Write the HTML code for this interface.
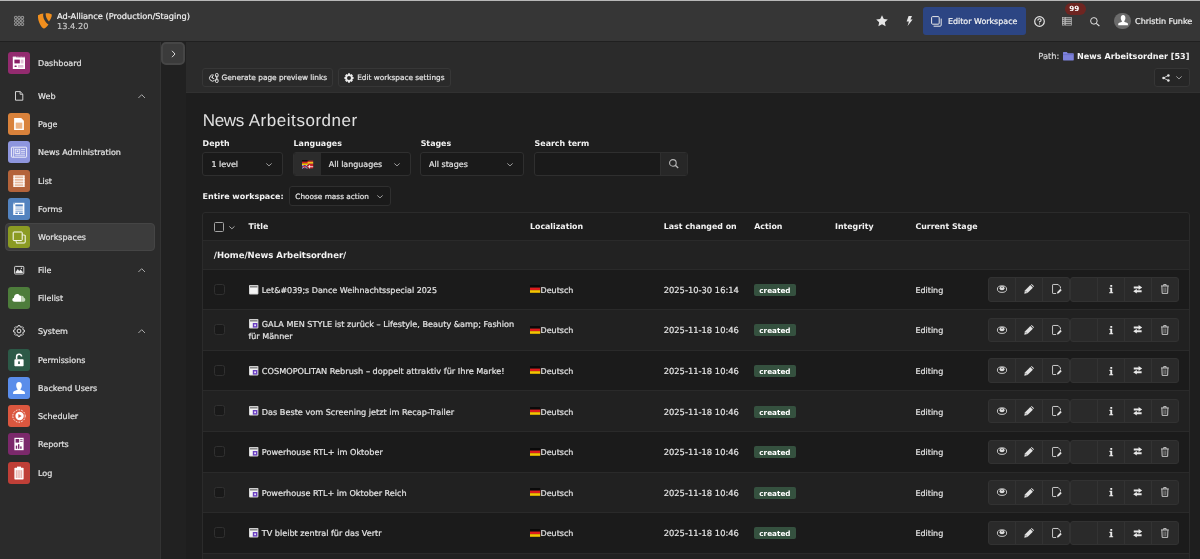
<!DOCTYPE html>
<html lang="en">
<head>
<meta charset="utf-8">
<title>Workspaces</title>
<style>
*{box-sizing:border-box;margin:0;padding:0}
html,body{width:1200px;height:559px;overflow:hidden;background:#1e1e1e;color:#e8e8e8;
  font-family:"DejaVu Sans","Liberation Sans",sans-serif;font-size:8px;text-rendering:geometricPrecision;-webkit-font-smoothing:antialiased}
body{position:relative}
#root{position:absolute;left:0;top:0;width:1200px;height:559px;will-change:transform;overflow:hidden}
.a{position:absolute}
.t{position:absolute;white-space:nowrap;line-height:10px;color:#e4e4e4;-webkit-text-stroke:0.2px}
.b{font-weight:700;-webkit-text-stroke:0}
svg{position:absolute;overflow:visible}
#topline{left:0;top:0;width:1200px;height:1px;background:#b8b8b8}
#topbar{left:0;top:1px;width:1200px;height:41px;background:#363636;border-bottom:1px solid #202020}
#sidebar{left:0;top:42px;width:161px;height:518px;background:#2b2b2b;border-right:1px solid #333333}
#strip{left:161px;top:42px;width:25px;height:518px;background:#212121}
#dochead{left:186px;top:42px;width:1014px;height:51px;background:#2b2b2b;border-bottom:1px solid #313131}
#toggle{left:161px;top:41.6px;width:24.4px;height:23.6px;background:#3b3b3b;border:2.6px solid #464646;border-radius:5px}
.mi{position:absolute;left:8px;width:22px;height:22px;border-radius:3px}
#active{left:5px;top:223.2px;width:150px;height:27.6px;background:#3c3c3c;border-radius:4px;border:1px solid #454545}
.btn{position:absolute;border:1px solid #373737;border-radius:3px;background:#2a2a2a}
h1{position:absolute;left:202.7px;top:108.6px;font-family:"Liberation Sans",sans-serif;font-weight:400;font-size:17px;color:#e0e0e0;line-height:24px;white-space:nowrap;letter-spacing:-0.22px}
.sel{position:absolute;border:1px solid #2f2f2f;border-radius:3px;background:#1a1a1a}
#table{left:202px;top:212px;width:988px;height:360px;border:1px solid #2b2b2b;background:#1d1d1d;border-radius:3px 3px 0 0}
.row{position:absolute;left:203px;width:986px;border-top:1px solid #2a2a2a}
.cb{position:absolute;left:213.6px;width:11px;height:11px;border:1px solid #303030;border-radius:2.5px;background:#191919}
.badge{position:absolute;left:754px;width:42px;height:12px;border-radius:2px;background:#35513f}
.grp{position:absolute;height:24.4px;border:1px solid #323232;border-radius:3px;background:#2a2a2a}
.sep{position:absolute;width:1px;height:22.4px;background:#333333}
</style>
</head>
<body>
<div id="root">
<div class="a" id="topbar"></div><div class="a" id="topline"></div>
<div class="a" id="sidebar"></div><div class="a" id="strip"></div><div class="a" id="dochead"></div>
<div class="a" id="toggle"></div>
<svg style="left:170.6px;top:49.6px" width="5" height="8" viewBox="0 0 5 8"><path d="M1 0.8 L4 4 L1 7.2" fill="none" stroke="#dcdcdc" stroke-width="1"/></svg>
<svg style="left:13.9px;top:15.9px" width="10.3" height="9.9" viewBox="0 0 10.5 10.5"><rect x="0.4" y="0.4" width="2.6" height="2.6" rx="0.6" fill="none" stroke="#bcbcbc" stroke-width="0.8"/><rect x="3.9" y="0.4" width="2.6" height="2.6" rx="0.6" fill="none" stroke="#bcbcbc" stroke-width="0.8"/><rect x="7.4" y="0.4" width="2.6" height="2.6" rx="0.6" fill="none" stroke="#bcbcbc" stroke-width="0.8"/><rect x="0.4" y="3.9" width="2.6" height="2.6" rx="0.6" fill="none" stroke="#bcbcbc" stroke-width="0.8"/><rect x="3.9" y="3.9" width="2.6" height="2.6" rx="0.6" fill="none" stroke="#bcbcbc" stroke-width="0.8"/><rect x="7.4" y="3.9" width="2.6" height="2.6" rx="0.6" fill="none" stroke="#bcbcbc" stroke-width="0.8"/><rect x="0.4" y="7.4" width="2.6" height="2.6" rx="0.6" fill="none" stroke="#bcbcbc" stroke-width="0.8"/><rect x="3.9" y="7.4" width="2.6" height="2.6" rx="0.6" fill="none" stroke="#bcbcbc" stroke-width="0.8"/><rect x="7.4" y="7.4" width="2.6" height="2.6" rx="0.6" fill="none" stroke="#bcbcbc" stroke-width="0.8"/></svg>
<svg style="left:36.8px;top:13px" width="15.4" height="16" viewBox="0 0 15 16"><path d="M0.8 2.3 C2.2 1.2 4.2 0.6 6.2 0.4 C5.6 2.2 6 4.6 7.4 7.2 C8.4 9 9.8 10.6 11.3 11.4 C9.9 13.4 8 15.2 6.5 15.6 C4.6 15.2 0.2 8.6 0.8 2.3 Z" fill="#f18f1e"/><path d="M8.6 0.3 C10.8 0.1 13.2 0.5 14.6 1.6 C14.8 3.8 13.4 6.8 11.8 8.4 C10.2 7.4 8 3.2 8.6 0.3 Z" fill="#f18f1e"/></svg>
<div class="t" style="left:57px;top:10.5px;font-size:8.24px;color:#f2f2f2">Ad-Alliance (Production/Staging)</div>
<div class="t" style="left:57px;top:21px;font-size:8.24px;color:#c6c6c6">13.4.20</div>
<svg style="left:875.5px;top:15px" width="12" height="11.5" viewBox="0 0 24 23"><path d="M12 0.5 L15.6 8 L23.6 9 L17.7 14.6 L19.2 22.6 L12 18.7 L4.8 22.6 L6.3 14.6 L0.4 9 L8.4 8 Z" fill="#e6e6e6"/></svg>
<svg style="left:905.5px;top:16px" width="7" height="10" viewBox="0 0 7 10"><path d="M2.6 0 L6 0 L4.4 3.4 L6.6 3.4 L1.6 10 L2.9 5.4 L0.6 5.4 Z" fill="#e6e6e6"/></svg>
<div class="a" style="left:923px;top:7px;width:103px;height:28px;background:#2c4583;border-radius:3px"></div>
<svg style="left:930.5px;top:15.5px" width="11" height="11" viewBox="0 0 11 11"><rect x="0.6" y="0.6" width="7.6" height="7.6" rx="1" fill="none" stroke="#e8e8e8" stroke-width="1"/><path d="M10.2 2.6 L10.2 9.2 Q10.2 10.2 9.2 10.2 L2.6 10.2" fill="none" stroke="#e8e8e8" stroke-width="1"/></svg>
<div class="t" style="left:948px;top:17.2px;font-size:7.95px;color:#f4f4f4">Editor Workspace</div>
<svg style="left:1034px;top:15.6px" width="11" height="11" viewBox="0 0 11 11"><circle cx="5.5" cy="5.5" r="4.8" fill="none" stroke="#e6e6e6" stroke-width="1.2"/><path d="M3.9 4.4 Q3.9 2.8 5.5 2.8 Q7.1 2.8 7.1 4.2 Q7.1 5.2 5.5 5.8 L5.5 6.6" fill="none" stroke="#e6e6e6" stroke-width="1.1"/><rect x="5" y="7.4" width="1" height="1" fill="#e6e6e6"/></svg>
<svg style="left:1062px;top:16.6px" width="10" height="8.6" viewBox="0 0 10 8.6"><rect x="0.4" y="0.4" width="2.2" height="1.6" fill="none" stroke="#bdbdbd" stroke-width="0.7"/><rect x="3.4" y="0.4" width="6.2" height="1.6" fill="none" stroke="#bdbdbd" stroke-width="0.7"/><rect x="0.4" y="2.4499999999999997" width="2.2" height="1.6" fill="none" stroke="#bdbdbd" stroke-width="0.7"/><rect x="3.4" y="2.4499999999999997" width="6.2" height="1.6" fill="none" stroke="#bdbdbd" stroke-width="0.7"/><rect x="0.4" y="4.5" width="2.2" height="1.6" fill="none" stroke="#bdbdbd" stroke-width="0.7"/><rect x="3.4" y="4.5" width="6.2" height="1.6" fill="none" stroke="#bdbdbd" stroke-width="0.7"/><rect x="0.4" y="6.55" width="2.2" height="1.6" fill="none" stroke="#bdbdbd" stroke-width="0.7"/><rect x="3.4" y="6.55" width="6.2" height="1.6" fill="none" stroke="#bdbdbd" stroke-width="0.7"/></svg>
<div class="a" style="left:1064.5px;top:2.5px;width:21.5px;height:12.5px;border-radius:6.5px;background:#6e2521"></div>
<div class="t b" style="left:1069.2px;top:4px;font-size:7.2px;color:#fff">99</div>
<svg style="left:1090px;top:16.6px" width="10" height="9.4" viewBox="0 0 10 9.4"><circle cx="3.9" cy="3.9" r="3.3" fill="none" stroke="#e2e2e2" stroke-width="1"/><path d="M6.3 6.3 L9.4 9" stroke="#e2e2e2" stroke-width="1.1" fill="none"/></svg>
<div class="a" style="left:1114.4px;top:12.6px;width:16.6px;height:16.6px;border-radius:50%;background:#6b6b6b"></div>
<svg style="left:1117.6px;top:15.4px" width="10.2" height="10.4" viewBox="0 0 10.2 10.4"><path d="M5.1 0 C6.8 0 7.4 1.4 7.4 3 C7.4 4.4 6.9 5.4 6.3 6 L6.3 6.8 C7.4 7.4 9.4 7.6 9.9 8.6 L10 10.2 L0.2 10.2 L0.3 8.6 C0.8 7.6 2.8 7.4 3.9 6.8 L3.9 6 C3.3 5.4 2.8 4.4 2.8 3 C2.8 1.4 3.4 0 5.1 0 Z" fill="#ffffff"/></svg>
<div class="t" style="left:1135px;top:16.6px;font-size:8.07px;color:#f0f0f0">Christin Funke</div>
<div class="a" id="active"></div>
<div class="mi" style="top:52.1px;background:#932b6f"></div>
<svg style="left:8px;top:52.1px" width="22" height="22" viewBox="0 0 22 22"><rect x="4.8" y="5.4" width="12.2" height="11.6" fill="#fff"/><rect x="4.8" y="4.6" width="3.6" height="1.2" fill="#fff"/><path d="M9 5 H16.6" stroke="#fff" stroke-width="0.6" stroke-dasharray="0.8 0.6"/><rect x="6.4" y="7.6" width="5.4" height="3.8" fill="#8a1f66"/><rect x="12.7" y="7.6" width="2.8" height="3.8" fill="#e3bfd8"/><rect x="6.4" y="13.4" width="2.4" height="1.6" rx="0.8" fill="#8a1f66"/><rect x="10" y="13" width="5.4" height="2.6" fill="#e3bfd8"/></svg>
<div class="t" style="left:38px;top:59px;font-size:8.02px">Dashboard</div>
<svg style="left:13px;top:89.8px" width="12" height="12" viewBox="0 0 12 12"><path d="M2.5 1.6 L7.2 1.6 L9.8 4.2 L9.8 10.2 L2.5 10.2 Z" fill="none" stroke="#e4e4e4" stroke-width="0.9" stroke-linejoin="round"/><path d="M7.1 1.7 L7.1 4.3 L9.7 4.3" fill="none" stroke="#e4e4e4" stroke-width="0.8"/></svg>
<div class="t" style="left:38px;top:92px;font-size:8.02px">Web</div>
<svg style="left:137.5px;top:93.6px" width="7.4" height="4.4" viewBox="0 0 7.4 4.4"><path d="M0.4 4 L3.7 0.7 L7 4" fill="none" stroke="#b8b8b8" stroke-width="0.9"/></svg>
<div class="mi" style="top:113.2px;background:#d9823b"></div>
<svg style="left:8px;top:113.2px" width="22" height="22" viewBox="0 0 22 22"><path d="M6.1 5 L13.2 5 L15.9 7.7 L15.9 17 L6.1 17 Z" fill="#fff"/><rect x="7.7" y="9.6" width="6.6" height="6.1" fill="#ecb384"/></svg>
<div class="t" style="left:38px;top:120px;font-size:8.02px">Page</div>
<div class="mi" style="top:141.4px;background:#8e96de"></div>
<svg style="left:8px;top:141.4px" width="22" height="22" viewBox="0 0 22 22"><g opacity="0.85"><rect x="3.4" y="6.2" width="15.2" height="10" rx="0.6" fill="none" stroke="#fff" stroke-width="1"/><path d="M5.6 7 L5.6 16" stroke="#fff" stroke-width="0.8"/><rect x="7.2" y="8.2" width="4.6" height="4.2" fill="none" stroke="#fff" stroke-width="0.9"/><rect x="8.6" y="9.4" width="1.8" height="1.8" fill="#fff"/><path d="M13 8.6 H17 M13 10.4 H17 M13 12.2 H17 M7.2 14.2 H17" stroke="#fff" stroke-width="0.8"/></g></svg>
<div class="t" style="left:38px;top:148px;font-size:8.02px">News Administration</div>
<div class="mi" style="top:169.8px;background:#b4633a"></div>
<svg style="left:8px;top:169.8px" width="22" height="22" viewBox="0 0 22 22"><rect x="5.4" y="5.6" width="11.2" height="11" fill="#e6b89c"/><path d="M5.4 5.9 H16.6 M5.4 8.6 H16.6 M5.4 11.2 H16.6 M5.4 13.8 H16.6 M5.4 16.4 H16.6" stroke="#fff" stroke-width="0.9"/><rect x="5.4" y="5.6" width="1.6" height="11" fill="#fff" opacity="0.75"/><rect x="15" y="5.6" width="1.6" height="11" fill="#fff" opacity="0.75"/></svg>
<div class="t" style="left:38px;top:177px;font-size:8.02px">List</div>
<div class="mi" style="top:198.1px;background:#5383bf"></div>
<svg style="left:8px;top:198.1px" width="22" height="22" viewBox="0 0 22 22"><path d="M5.2 4.8 H16.4 V17 H5.2 Z" fill="#fff"/><path d="M5.2 4.8 H7 V6.2 H5.2 Z" fill="#5383bf" opacity="0.6"/><rect x="7.4" y="6.4" width="7.4" height="2" fill="#5383bf"/><path d="M7.4 10 H14.8 M7.4 11.8 H14.8 M7.4 13.4 H14.8" stroke="#7ea2d2" stroke-width="0.8"/><rect x="7.4" y="14.6" width="2.4" height="1.4" fill="#5383bf"/><rect x="11" y="14.6" width="3.8" height="1.4" fill="#5383bf"/></svg>
<div class="t" style="left:38px;top:205px;font-size:8.02px">Forms</div>
<div class="mi" style="top:226.2px;background:#8b9b23"></div>
<svg style="left:8px;top:226.2px" width="22" height="22" viewBox="0 0 22 22"><rect x="5.2" y="6" width="9" height="8.6" rx="0.8" fill="none" stroke="#fff" stroke-width="1"/><path d="M17.2 9.4 V16 Q17.2 17 16.2 17 H8.4" fill="none" stroke="#fff" stroke-width="1"/><path d="M14.4 9 H16.2 Q17.2 9 17.2 10 M8.2 14.8 V16 Q8.2 17 9.2 17" fill="none" stroke="#fff" stroke-width="0.9" opacity="0.9"/></svg>
<div class="t" style="left:38px;top:233px;font-size:8.02px">Workspaces</div>
<svg style="left:13px;top:264px" width="12" height="12" viewBox="0 0 12 12"><rect x="1.6" y="2.4" width="9.2" height="7.6" rx="0.8" fill="none" stroke="#e6e6e6" stroke-width="0.9"/><path d="M2.6 9 L2.6 8 L4.8 5 L6.2 7 L7.6 5.6 L9.8 8 L9.8 9 Z" fill="#e6e6e6"/><circle cx="8.4" cy="4.2" r="0.7" fill="#e6e6e6"/></svg>
<div class="t" style="left:38px;top:266px;font-size:8.02px">File</div>
<svg style="left:137.5px;top:267.8px" width="7.4" height="4.4" viewBox="0 0 7.4 4.4"><path d="M0.4 4 L3.7 0.7 L7 4" fill="none" stroke="#b8b8b8" stroke-width="0.9"/></svg>
<div class="mi" style="top:287.2px;background:#4d7c3b"></div>
<svg style="left:8px;top:287.2px" width="22" height="22" viewBox="0 0 22 22"><path d="M6.6 14.8 C3.8 14.8 3.6 11.2 6 10.8 C5.6 7.4 10 5.6 11.6 8.6 C12.4 8.4 13 8.8 13.2 9.4 L13.2 14.8 Z" fill="#fff"/><path d="M13.2 8.8 C15 8.4 16 9.8 15.8 10.8 C17.8 11 17.9 14.8 15.6 14.8 L13.2 14.8 Z" fill="#c3d6ba"/></svg>
<div class="t" style="left:38px;top:294px;font-size:8.02px">Filelist</div>
<svg style="left:13px;top:325.4px" width="12" height="12" viewBox="0 0 12 12"><path d="M5.1 0.6 H6.9 L7.2 1.9 L8.1 2.3 L9.2 1.6 L10.4 2.8 L9.7 3.9 L10.1 4.8 L11.4 5.1 V6.9 L10.1 7.2 L9.7 8.1 L10.4 9.2 L9.2 10.4 L8.1 9.7 L7.2 10.1 L6.9 11.4 H5.1 L4.8 10.1 L3.9 9.7 L2.8 10.4 L1.6 9.2 L2.3 8.1 L1.9 7.2 L0.6 6.9 V5.1 L1.9 4.8 L2.3 3.9 L1.6 2.8 L2.8 1.6 L3.9 2.3 L4.8 1.9 Z" fill="none" stroke="#e4e4e4" stroke-width="1" stroke-linejoin="round"/><circle cx="6" cy="6" r="1.9" fill="none" stroke="#e4e4e4" stroke-width="1"/></svg>
<div class="t" style="left:38px;top:327px;font-size:8.02px">System</div>
<svg style="left:137.5px;top:329.2px" width="7.4" height="4.4" viewBox="0 0 7.4 4.4"><path d="M0.4 4 L3.7 0.7 L7 4" fill="none" stroke="#b8b8b8" stroke-width="0.9"/></svg>
<div class="mi" style="top:348.8px;background:#2c5947"></div>
<svg style="left:8px;top:348.8px" width="22" height="22" viewBox="0 0 22 22"><rect x="6.4" y="10.2" width="9.2" height="7" rx="0.8" fill="#fff"/><path d="M8.6 10.2 V7.8 C8.6 4.6 13.6 4.6 13.6 7.4" fill="none" stroke="#fff" stroke-width="1.5"/><rect x="10.2" y="12.4" width="1.6" height="2.6" fill="#2c5947"/></svg>
<div class="t" style="left:38px;top:356px;font-size:8.02px">Permissions</div>
<div class="mi" style="top:376.6px;background:#5a8dea"></div>
<svg style="left:8px;top:376.6px" width="22" height="22" viewBox="0 0 22 22"><path d="M11 5 C13 5 13.8 6.6 13.8 8.4 C13.8 10 13.2 11.2 12.5 11.9 L12.5 12.8 C13.8 13.5 16.2 13.8 16.8 15 L17 17 L5 17 L5.2 15 C5.8 13.8 8.2 13.5 9.5 12.8 L9.5 11.9 C8.8 11.2 8.2 10 8.2 8.4 C8.2 6.6 9 5 11 5 Z" fill="#fff"/></svg>
<div class="t" style="left:38px;top:384px;font-size:8.02px">Backend Users</div>
<div class="mi" style="top:404.9px;background:#db573f"></div>
<svg style="left:8px;top:404.9px" width="22" height="22" viewBox="0 0 22 22"><circle cx="11" cy="11" r="6.2" fill="none" stroke="#fff" stroke-width="0.9" stroke-dasharray="1.6 1.2"/><circle cx="11.6" cy="11" r="4.2" fill="#fff"/><path d="M10.4 9 L13.6 11 L10.4 13 Z" fill="#db573f"/></svg>
<div class="t" style="left:38px;top:412px;font-size:8.02px">Scheduler</div>
<div class="mi" style="top:433.2px;background:#7b296b"></div>
<svg style="left:8px;top:433.2px" width="22" height="22" viewBox="0 0 22 22"><rect x="6.4" y="4.8" width="9.2" height="12.4" fill="#fff"/><rect x="7.6" y="6" width="3.6" height="3.6" fill="#7b296b"/><path d="M12.2 6.6 H14.6 M12.2 8.4 H14.6" stroke="#7b296b" stroke-width="0.8"/><rect x="7.8" y="12.6" width="1.4" height="3.2" fill="#7b296b"/><rect x="10" y="11.2" width="1.4" height="4.6" fill="#7b296b"/><rect x="12.2" y="13.4" width="1.4" height="2.4" fill="#7b296b"/></svg>
<div class="t" style="left:38px;top:440px;font-size:8.02px">Reports</div>
<div class="mi" style="top:461.5px;background:#bf3f37"></div>
<svg style="left:8px;top:461.5px" width="22" height="22" viewBox="0 0 22 22"><rect x="6.4" y="5.8" width="9.2" height="11.6" rx="0.6" fill="#fff"/><rect x="9" y="4.6" width="4" height="2.2" fill="#fff"/><rect x="7.8" y="8.2" width="6.4" height="7.8" fill="#e9b1ab"/><path d="M9.4 8.2 V16 M11 8.2 V16 M12.6 8.2 V16" stroke="#fff" stroke-width="0.5"/></svg>
<div class="t" style="left:38px;top:469px;font-size:8.02px">Log</div>
<div class="btn" style="left:202px;top:68px;width:131px;height:19px"></div>
<svg style="left:209px;top:73px" width="10" height="10" viewBox="0 0 10 10"><path d="M4.9 2.2 A3.1 3.1 0 1 0 5.6 7.4" fill="none" stroke="#e8e8e8" stroke-width="1"/><path d="M3.5 3 V5.2 L5.2 5.8" fill="none" stroke="#e8e8e8" stroke-width="0.9"/><path d="M3.5 5.2 L1.8 3.4" fill="none" stroke="#e8e8e8" stroke-width="0.8"/><rect x="6.5" y="0.5" width="2.6" height="3.5" rx="1.1" fill="none" stroke="#e8e8e8" stroke-width="1"/><rect x="6.5" y="6" width="2.6" height="3.5" rx="1.1" fill="none" stroke="#e8e8e8" stroke-width="1"/><path d="M7.8 2.6 V7.4" stroke="#e8e8e8" stroke-width="1"/></svg>
<div class="t" style="left:221.5px;top:72.9px;font-size:7.36px">Generate page preview links</div>
<div class="btn" style="left:338px;top:68px;width:113px;height:19px"></div>
<svg style="left:344px;top:72.6px" width="10" height="10" viewBox="0 0 12 12"><path d="M5 0.4 H7 L7.4 2 L8.9 1.3 L10.7 3.1 L10 4.6 L11.6 5 V7 L10 7.4 L10.7 8.9 L8.9 10.7 L7.4 10 L7 11.6 H5 L4.6 10 L3.1 10.7 L1.3 8.9 L2 7.4 L0.4 7 V5 L2 4.6 L1.3 3.1 L3.1 1.3 L4.6 2 Z M6 3.6 A2.4 2.4 0 1 0 6 8.4 A2.4 2.4 0 1 0 6 3.6 Z" fill="#ececec" fill-rule="evenodd"/></svg>
<div class="t" style="left:357.2px;top:72.9px;font-size:7.34px">Edit workspace settings</div>
<div class="t" style="left:1038.3px;top:51px;font-size:8.3px;color:#d8d8d8">Path:</div>
<svg style="left:1063px;top:52.4px" width="10.8" height="8.4" viewBox="0 0 10.8 8.4"><path d="M0 0.6 Q0 0 0.6 0 H3.8 L4.8 1.2 H10.2 Q10.8 1.2 10.8 1.8 V7.8 Q10.8 8.4 10.2 8.4 H0.6 Q0 8.4 0 7.8 Z" fill="#7d81da"/><path d="M0 2.6 H10.8" stroke="#6064c0" stroke-width="0.6"/></svg>
<div class="t b" style="left:1077px;top:51px;font-size:8.11px;color:#f4f4f4">News Arbeitsordner [53]</div>
<div class="btn" style="left:1154px;top:68px;width:36px;height:19px;background:#262626;border-color:#363636"></div>
<svg style="left:1161.6px;top:73.8px" width="8" height="8" viewBox="0 0 8 8"><circle cx="6.4" cy="1.4" r="1.25" fill="#e4e4e4"/><circle cx="1.5" cy="4" r="1.25" fill="#e4e4e4"/><circle cx="6.4" cy="6.6" r="1.25" fill="#e4e4e4"/><path d="M1.5 4 L6.4 1.4 M1.5 4 L6.4 6.6" stroke="#e4e4e4" stroke-width="0.8"/></svg>
<svg style="left:1175.8px;top:76.4px" width="6" height="3.30" viewBox="0 0 6 3.30"><path d="M0.3 0.4 L3.0 2.90 L5.7 0.4" fill="none" stroke="#b0b0b0" stroke-width="0.85"/></svg>
<h1><span style="letter-spacing:-0.3px">News</span><span style="letter-spacing:0px"> </span><span style="letter-spacing:0.54px">Arbeitsordner</span></h1>
<div class="t b" style="left:202.6px;top:139.3px;font-size:7.9px;color:#f2f2f2">Depth</div>
<div class="t b" style="left:293.6px;top:139.3px;font-size:7.9px;color:#f2f2f2">Languages</div>
<div class="t b" style="left:420.7px;top:139.3px;font-size:7.9px;color:#f2f2f2">Stages</div>
<div class="t b" style="left:534.6px;top:139.3px;font-size:7.9px;color:#f2f2f2">Search term</div>
<div class="sel" style="left:202px;top:151.6px;width:81px;height:24.6px"></div>
<div class="t" style="left:211.4px;top:159.8px;font-size:8px">1 level</div>
<svg style="left:266.2px;top:162.6px" width="6" height="3.30" viewBox="0 0 6 3.30"><path d="M0.3 0.4 L3.0 2.90 L5.7 0.4" fill="none" stroke="#b0b0b0" stroke-width="0.85"/></svg>
<div class="sel" style="left:293px;top:151.6px;width:118px;height:24.6px"></div>
<div class="a" style="left:294px;top:152.6px;width:27px;height:22.6px;background:#2c2c2c;border-radius:2px 0 0 2px"></div>
<svg style="left:301.8px;top:160px" width="11.2" height="8.4" viewBox="0 0 11.2 8.4"><rect x="0" y="0" width="7" height="1.7" fill="#111"/><rect x="0" y="1.7" width="7" height="1.7" fill="#d22"/><rect x="0" y="3.4" width="7" height="1.6" fill="#f2c500"/><rect x="5.6" y="0.6" width="5.6" height="1.2" fill="#c8242b"/><rect x="5.6" y="1.8" width="5.6" height="2" fill="#f4c020"/><rect x="5.6" y="3.8" width="5.6" height="1.2" fill="#c8242b"/><rect x="0" y="5" width="5.4" height="3.4" fill="#2b3a8c"/><path d="M0 5 L5.4 8.4 M5.4 5 L0 8.4" stroke="#fff" stroke-width="0.6"/><path d="M2.7 5 V8.4 M0 6.7 H5.4" stroke="#d22" stroke-width="0.7"/><rect x="5.6" y="5" width="5.6" height="3.4" fill="#c8242b"/><path d="M7.6 5 V8.4 M5.6 6.7 H11.2" stroke="#fff" stroke-width="0.8"/></svg>
<div class="t" style="left:328.8px;top:159.8px;font-size:7.94px">All languages</div>
<svg style="left:393.6px;top:162.6px" width="6" height="3.30" viewBox="0 0 6 3.30"><path d="M0.3 0.4 L3.0 2.90 L5.7 0.4" fill="none" stroke="#b0b0b0" stroke-width="0.85"/></svg>
<div class="sel" style="left:420px;top:151.6px;width:104px;height:24.6px"></div>
<div class="t" style="left:429px;top:159.8px;font-size:8.03px">All stages</div>
<svg style="left:507.4px;top:162.6px" width="6" height="3.30" viewBox="0 0 6 3.30"><path d="M0.3 0.4 L3.0 2.90 L5.7 0.4" fill="none" stroke="#b0b0b0" stroke-width="0.85"/></svg>
<div class="sel" style="left:534px;top:151.6px;width:154px;height:24.6px"></div>
<div class="a" style="left:660px;top:152.6px;width:27px;height:22.6px;background:#272727;border-left:1px solid #2f2f2f;border-radius:0 2px 2px 0"></div>
<svg style="left:668.6px;top:159.4px" width="10" height="9.6" viewBox="0 0 10 9.6"><circle cx="3.9" cy="3.9" r="3.3" fill="none" stroke="#b8b8b8" stroke-width="1.1"/><path d="M6.3 6.3 L9.2 9" stroke="#b8b8b8" stroke-width="1.3" fill="none"/></svg>
<div class="t b" style="left:202.6px;top:192.4px;font-size:7.98px;color:#f2f2f2">Entire workspace:</div>
<div class="sel" style="left:289px;top:186.3px;width:102px;height:19.6px"></div>
<div class="t" style="left:295.3px;top:192.1px;font-size:7.33px">Choose mass action</div>
<svg style="left:377px;top:194.6px" width="6" height="3.30" viewBox="0 0 6 3.30"><path d="M0.3 0.4 L3.0 2.90 L5.7 0.4" fill="none" stroke="#b0b0b0" stroke-width="0.85"/></svg>
<div class="a" id="table"></div>
<div class="row" style="top:239.8px;height:29px;background:#222222"></div>
<div class="row" style="top:268.5px;height:40.62px;background:#1b1b1b"></div>
<div class="row" style="top:309.1px;height:40.62px;background:#212121"></div>
<div class="row" style="top:349.7px;height:40.62px;background:#1b1b1b"></div>
<div class="row" style="top:390.4px;height:40.62px;background:#212121"></div>
<div class="row" style="top:431.0px;height:40.62px;background:#1b1b1b"></div>
<div class="row" style="top:471.6px;height:40.62px;background:#212121"></div>
<div class="row" style="top:512.2px;height:40.62px;background:#1b1b1b"></div>
<div class="row" style="top:552.8px;height:40.62px;background:#212121"></div>
<div class="a" style="left:214px;top:222px;width:10px;height:10px;border:1px solid #a4a4a4;border-radius:1.5px"></div>
<svg style="left:229.4px;top:225.8px" width="5.8" height="3.19" viewBox="0 0 5.8 3.19"><path d="M0.3 0.4 L2.9 2.79 L5.5 0.4" fill="none" stroke="#c0c0c0" stroke-width="0.85"/></svg>
<div class="t b" style="left:248.4px;top:222.4px;font-size:7.87px;color:#f2f2f2">Title</div>
<div class="t b" style="left:530px;top:222.4px;font-size:7.87px;color:#f2f2f2">Localization</div>
<div class="t b" style="left:663.7px;top:222.4px;font-size:7.87px;color:#f2f2f2">Last changed on</div>
<div class="t b" style="left:754.2px;top:222.4px;font-size:7.87px;color:#f2f2f2">Action</div>
<div class="t b" style="left:835px;top:222.4px;font-size:7.87px;color:#f2f2f2">Integrity</div>
<div class="t b" style="left:915.4px;top:222.4px;font-size:7.87px;color:#f2f2f2">Current Stage</div>
<div class="t b" style="left:213.8px;top:250.5px;font-size:8.5px;color:#f2f2f2">/Home/News Arbeitsordner/</div>
<div class="cb" style="top:283.5px"></div>
<svg style="left:248.9px;top:284.5px" width="9.4" height="9.4" viewBox="0 0 9.4 9.4"><rect x="0" y="0" width="9.4" height="9.4" rx="0.8" fill="#d6d6d6"/><rect x="1" y="0.9" width="7.4" height="1.5" fill="#8a8a8a"/><rect x="1" y="3" width="7.4" height="5.6" fill="#f4f4f4"/></svg>
<div class="t" style="left:261.8px;top:286.00px;font-size:8.01px;">Let&amp;#039;s Dance Weihnachtsspecial 2025</div>
<svg style="left:530px;top:285.2px" width="10.2" height="7.8" viewBox="0 0 10.2 7.8"><rect width="10.2" height="2.7" fill="#0a0a0a"/><rect y="2.6" width="10.2" height="2.7" fill="#dd1c1c"/><rect y="5.2" width="10.2" height="2.6" fill="#f5c400"/></svg>
<div class="t" style="left:540.5px;top:286.00px;font-size:8.0px;">Deutsch</div>
<div class="t" style="left:663.7px;top:285.00px;font-size:8.36px;">2025-10-30 16:14</div>
<div class="badge" style="top:283.6px"></div>
<div class="t b" style="left:759.3px;top:286.00px;font-size:7.25px;color:#fff">created</div>
<div class="t" style="left:915.4px;top:286.00px;font-size:8.0px;">Editing</div>
<div class="grp" style="left:988px;top:277.2px;width:82px"></div>
<div class="grp" style="left:1070px;top:277.2px;width:108.9px"></div>
<div class="sep" style="left:1015.3px;top:278.2px"></div>
<div class="sep" style="left:1042.2px;top:278.2px"></div>
<div class="sep" style="left:1097.2px;top:278.2px"></div>
<div class="sep" style="left:1124.4px;top:278.2px"></div>
<div class="sep" style="left:1151px;top:278.2px"></div>
<svg style="left:997.3px;top:284.9px" width="10" height="8" viewBox="0 0 10 8"><ellipse cx="5" cy="4.1" rx="4.6" ry="3.3" fill="none" stroke="#d8d8d8" stroke-width="0.9"/><ellipse cx="5" cy="3.2" rx="2.5" ry="2.1" fill="#dcdcdc"/><circle cx="5" cy="2.4" r="0.7" fill="#555"/></svg>
<svg style="left:1023.9px;top:284.4px" width="9.9" height="9.9" viewBox="0 0 10 10"><path d="M0.3 9.8 L0.9 6.6 L6.4 1.1 L9 3.7 L3.5 9.2 Z" fill="#e2e2e2"/><path d="M7 0.6 L7.7 0 L10.1 2.4 L9.5 3.1 Z" fill="#e2e2e2"/><path d="M1.3 6.9 L3.2 8.8" stroke="#2a2a2a" stroke-width="0.5"/></svg>
<svg style="left:1051.9px;top:284.1px" width="9.8" height="10" viewBox="0 0 10 10.4"><path d="M6.4 0.5 H1.1 Q0.5 0.5 0.5 1.1 V9.3 Q0.5 9.9 1.1 9.9 H4.2" fill="none" stroke="#e2e2e2" stroke-width="0.9"/><path d="M6.2 0.5 L8.7 3 V4.6" fill="none" stroke="#e2e2e2" stroke-width="0.9"/><path d="M5 10 L5.4 8.2 L8.6 5 L10 6.4 L6.8 9.6 Z" fill="#e2e2e2"/></svg>
<svg style="left:1108.5px;top:285.3px" width="4.3" height="8.3" viewBox="0 0 4.2 8.8"><rect x="1.2" y="0" width="2" height="1.9" fill="#ececec"/><path d="M0.3 3 H3.2 V7.6 H4.2 V8.8 H0 V7.6 H1.2 V4.2 H0.3 Z" fill="#ececec"/></svg>
<svg style="left:1133.2px;top:284.8px" width="9.4" height="8.6" viewBox="0 0 10 9.6"><path d="M0.6 1.7 H6 V0 L10 2.8 L6 5.6 V3.9 H0.6 Z" fill="#e8e8e8"/><path d="M9.4 5.8 H4 V4.1 L0 6.9 L4 9.6 V8 H9.4 Z" fill="#e8e8e8"/></svg>
<svg style="left:1160.9px;top:284.3px" width="7.8" height="10" viewBox="0 0 8 10"><path d="M0 1.9 H8" stroke="#dcdcdc" stroke-width="1"/><path d="M2.7 1.6 V0.5 H5.3 V1.6" fill="none" stroke="#dcdcdc" stroke-width="0.9"/><path d="M0.9 2.2 L1.2 9.5 H6.8 L7.1 2.2" fill="none" stroke="#dcdcdc" stroke-width="0.9"/><path d="M3.1 3.4 V8.2 M4.9 3.4 V8.2" stroke="#d0d0d0" stroke-width="0.55"/></svg>
<div class="cb" style="top:324.1px"></div>
<svg style="left:248.9px;top:319.1px" width="9.4" height="9.4" viewBox="0 0 9.4 9.4"><rect x="0" y="0" width="9.4" height="9.4" rx="0.8" fill="#d6d6d6"/><rect x="1" y="0.9" width="7.4" height="1.5" fill="#8a8a8a"/><rect x="1" y="3" width="7.4" height="5.6" fill="#f4f4f4"/><rect x="3.8" y="4" width="4.6" height="4.6" fill="#6a3fc0"/><rect x="5.2" y="5.4" width="1.8" height="1.8" fill="#e8defa"/></svg>
<div class="t" style="left:261.8px;top:319.00px;font-size:8.15px;">GALA MEN STYLE ist zurück – Lifestyle, Beauty &amp;amp; Fashion</div>
<div class="t" style="left:248.4px;top:332.00px;font-size:8.06px;">für Männer</div>
<svg style="left:530px;top:325.8px" width="10.2" height="7.8" viewBox="0 0 10.2 7.8"><rect width="10.2" height="2.7" fill="#0a0a0a"/><rect y="2.6" width="10.2" height="2.7" fill="#dd1c1c"/><rect y="5.2" width="10.2" height="2.6" fill="#f5c400"/></svg>
<div class="t" style="left:540.5px;top:326.00px;font-size:8.0px;">Deutsch</div>
<div class="t" style="left:663.7px;top:325.00px;font-size:8.36px;">2025-11-18 10:46</div>
<div class="badge" style="top:324.2px"></div>
<div class="t b" style="left:759.3px;top:326.00px;font-size:7.25px;color:#fff">created</div>
<div class="t" style="left:915.4px;top:326.00px;font-size:8.0px;">Editing</div>
<div class="grp" style="left:988px;top:317.8px;width:82px"></div>
<div class="grp" style="left:1070px;top:317.8px;width:108.9px"></div>
<div class="sep" style="left:1015.3px;top:318.8px"></div>
<div class="sep" style="left:1042.2px;top:318.8px"></div>
<div class="sep" style="left:1097.2px;top:318.8px"></div>
<div class="sep" style="left:1124.4px;top:318.8px"></div>
<div class="sep" style="left:1151px;top:318.8px"></div>
<svg style="left:997.3px;top:325.5px" width="10" height="8" viewBox="0 0 10 8"><ellipse cx="5" cy="4.1" rx="4.6" ry="3.3" fill="none" stroke="#d8d8d8" stroke-width="0.9"/><ellipse cx="5" cy="3.2" rx="2.5" ry="2.1" fill="#dcdcdc"/><circle cx="5" cy="2.4" r="0.7" fill="#555"/></svg>
<svg style="left:1023.9px;top:325.0px" width="9.9" height="9.9" viewBox="0 0 10 10"><path d="M0.3 9.8 L0.9 6.6 L6.4 1.1 L9 3.7 L3.5 9.2 Z" fill="#e2e2e2"/><path d="M7 0.6 L7.7 0 L10.1 2.4 L9.5 3.1 Z" fill="#e2e2e2"/><path d="M1.3 6.9 L3.2 8.8" stroke="#2a2a2a" stroke-width="0.5"/></svg>
<svg style="left:1051.9px;top:324.7px" width="9.8" height="10" viewBox="0 0 10 10.4"><path d="M6.4 0.5 H1.1 Q0.5 0.5 0.5 1.1 V9.3 Q0.5 9.9 1.1 9.9 H4.2" fill="none" stroke="#e2e2e2" stroke-width="0.9"/><path d="M6.2 0.5 L8.7 3 V4.6" fill="none" stroke="#e2e2e2" stroke-width="0.9"/><path d="M5 10 L5.4 8.2 L8.6 5 L10 6.4 L6.8 9.6 Z" fill="#e2e2e2"/></svg>
<svg style="left:1108.5px;top:325.9px" width="4.3" height="8.3" viewBox="0 0 4.2 8.8"><rect x="1.2" y="0" width="2" height="1.9" fill="#ececec"/><path d="M0.3 3 H3.2 V7.6 H4.2 V8.8 H0 V7.6 H1.2 V4.2 H0.3 Z" fill="#ececec"/></svg>
<svg style="left:1133.2px;top:325.4px" width="9.4" height="8.6" viewBox="0 0 10 9.6"><path d="M0.6 1.7 H6 V0 L10 2.8 L6 5.6 V3.9 H0.6 Z" fill="#e8e8e8"/><path d="M9.4 5.8 H4 V4.1 L0 6.9 L4 9.6 V8 H9.4 Z" fill="#e8e8e8"/></svg>
<svg style="left:1160.9px;top:324.9px" width="7.8" height="10" viewBox="0 0 8 10"><path d="M0 1.9 H8" stroke="#dcdcdc" stroke-width="1"/><path d="M2.7 1.6 V0.5 H5.3 V1.6" fill="none" stroke="#dcdcdc" stroke-width="0.9"/><path d="M0.9 2.2 L1.2 9.5 H6.8 L7.1 2.2" fill="none" stroke="#dcdcdc" stroke-width="0.9"/><path d="M3.1 3.4 V8.2 M4.9 3.4 V8.2" stroke="#d0d0d0" stroke-width="0.55"/></svg>
<div class="cb" style="top:364.7px"></div>
<svg style="left:248.9px;top:365.7px" width="9.4" height="9.4" viewBox="0 0 9.4 9.4"><rect x="0" y="0" width="9.4" height="9.4" rx="0.8" fill="#d6d6d6"/><rect x="1" y="0.9" width="7.4" height="1.5" fill="#8a8a8a"/><rect x="1" y="3" width="7.4" height="5.6" fill="#f4f4f4"/><rect x="3.8" y="4" width="4.6" height="4.6" fill="#6a3fc0"/><rect x="5.2" y="5.4" width="1.8" height="1.8" fill="#e8defa"/></svg>
<div class="t" style="left:261.8px;top:366.00px;font-size:8.2px;">COSMOPOLITAN Rebrush – doppelt attraktiv für Ihre Marke!</div>
<svg style="left:530px;top:366.4px" width="10.2" height="7.8" viewBox="0 0 10.2 7.8"><rect width="10.2" height="2.7" fill="#0a0a0a"/><rect y="2.6" width="10.2" height="2.7" fill="#dd1c1c"/><rect y="5.2" width="10.2" height="2.6" fill="#f5c400"/></svg>
<div class="t" style="left:540.5px;top:367.00px;font-size:8.0px;">Deutsch</div>
<div class="t" style="left:663.7px;top:366.00px;font-size:8.36px;">2025-11-18 10:46</div>
<div class="badge" style="top:364.8px"></div>
<div class="t b" style="left:759.3px;top:367.00px;font-size:7.25px;color:#fff">created</div>
<div class="t" style="left:915.4px;top:367.00px;font-size:8.0px;">Editing</div>
<div class="grp" style="left:988px;top:358.4px;width:82px"></div>
<div class="grp" style="left:1070px;top:358.4px;width:108.9px"></div>
<div class="sep" style="left:1015.3px;top:359.4px"></div>
<div class="sep" style="left:1042.2px;top:359.4px"></div>
<div class="sep" style="left:1097.2px;top:359.4px"></div>
<div class="sep" style="left:1124.4px;top:359.4px"></div>
<div class="sep" style="left:1151px;top:359.4px"></div>
<svg style="left:997.3px;top:366.1px" width="10" height="8" viewBox="0 0 10 8"><ellipse cx="5" cy="4.1" rx="4.6" ry="3.3" fill="none" stroke="#d8d8d8" stroke-width="0.9"/><ellipse cx="5" cy="3.2" rx="2.5" ry="2.1" fill="#dcdcdc"/><circle cx="5" cy="2.4" r="0.7" fill="#555"/></svg>
<svg style="left:1023.9px;top:365.6px" width="9.9" height="9.9" viewBox="0 0 10 10"><path d="M0.3 9.8 L0.9 6.6 L6.4 1.1 L9 3.7 L3.5 9.2 Z" fill="#e2e2e2"/><path d="M7 0.6 L7.7 0 L10.1 2.4 L9.5 3.1 Z" fill="#e2e2e2"/><path d="M1.3 6.9 L3.2 8.8" stroke="#2a2a2a" stroke-width="0.5"/></svg>
<svg style="left:1051.9px;top:365.3px" width="9.8" height="10" viewBox="0 0 10 10.4"><path d="M6.4 0.5 H1.1 Q0.5 0.5 0.5 1.1 V9.3 Q0.5 9.9 1.1 9.9 H4.2" fill="none" stroke="#e2e2e2" stroke-width="0.9"/><path d="M6.2 0.5 L8.7 3 V4.6" fill="none" stroke="#e2e2e2" stroke-width="0.9"/><path d="M5 10 L5.4 8.2 L8.6 5 L10 6.4 L6.8 9.6 Z" fill="#e2e2e2"/></svg>
<svg style="left:1108.5px;top:366.5px" width="4.3" height="8.3" viewBox="0 0 4.2 8.8"><rect x="1.2" y="0" width="2" height="1.9" fill="#ececec"/><path d="M0.3 3 H3.2 V7.6 H4.2 V8.8 H0 V7.6 H1.2 V4.2 H0.3 Z" fill="#ececec"/></svg>
<svg style="left:1133.2px;top:366.0px" width="9.4" height="8.6" viewBox="0 0 10 9.6"><path d="M0.6 1.7 H6 V0 L10 2.8 L6 5.6 V3.9 H0.6 Z" fill="#e8e8e8"/><path d="M9.4 5.8 H4 V4.1 L0 6.9 L4 9.6 V8 H9.4 Z" fill="#e8e8e8"/></svg>
<svg style="left:1160.9px;top:365.5px" width="7.8" height="10" viewBox="0 0 8 10"><path d="M0 1.9 H8" stroke="#dcdcdc" stroke-width="1"/><path d="M2.7 1.6 V0.5 H5.3 V1.6" fill="none" stroke="#dcdcdc" stroke-width="0.9"/><path d="M0.9 2.2 L1.2 9.5 H6.8 L7.1 2.2" fill="none" stroke="#dcdcdc" stroke-width="0.9"/><path d="M3.1 3.4 V8.2 M4.9 3.4 V8.2" stroke="#d0d0d0" stroke-width="0.55"/></svg>
<div class="cb" style="top:405.4px"></div>
<svg style="left:248.9px;top:406.4px" width="9.4" height="9.4" viewBox="0 0 9.4 9.4"><rect x="0" y="0" width="9.4" height="9.4" rx="0.8" fill="#d6d6d6"/><rect x="1" y="0.9" width="7.4" height="1.5" fill="#8a8a8a"/><rect x="1" y="3" width="7.4" height="5.6" fill="#f4f4f4"/><rect x="3.8" y="4" width="4.6" height="4.6" fill="#6a3fc0"/><rect x="5.2" y="5.4" width="1.8" height="1.8" fill="#e8defa"/></svg>
<div class="t" style="left:261.8px;top:407.00px;font-size:8.14px;">Das Beste vom Screening jetzt im Recap-Trailer</div>
<svg style="left:530px;top:407.1px" width="10.2" height="7.8" viewBox="0 0 10.2 7.8"><rect width="10.2" height="2.7" fill="#0a0a0a"/><rect y="2.6" width="10.2" height="2.7" fill="#dd1c1c"/><rect y="5.2" width="10.2" height="2.6" fill="#f5c400"/></svg>
<div class="t" style="left:540.5px;top:408.00px;font-size:8.0px;">Deutsch</div>
<div class="t" style="left:663.7px;top:407.00px;font-size:8.36px;">2025-11-18 10:46</div>
<div class="badge" style="top:405.5px"></div>
<div class="t b" style="left:759.3px;top:408.00px;font-size:7.25px;color:#fff">created</div>
<div class="t" style="left:915.4px;top:408.00px;font-size:8.0px;">Editing</div>
<div class="grp" style="left:988px;top:399.1px;width:82px"></div>
<div class="grp" style="left:1070px;top:399.1px;width:108.9px"></div>
<div class="sep" style="left:1015.3px;top:400.1px"></div>
<div class="sep" style="left:1042.2px;top:400.1px"></div>
<div class="sep" style="left:1097.2px;top:400.1px"></div>
<div class="sep" style="left:1124.4px;top:400.1px"></div>
<div class="sep" style="left:1151px;top:400.1px"></div>
<svg style="left:997.3px;top:406.8px" width="10" height="8" viewBox="0 0 10 8"><ellipse cx="5" cy="4.1" rx="4.6" ry="3.3" fill="none" stroke="#d8d8d8" stroke-width="0.9"/><ellipse cx="5" cy="3.2" rx="2.5" ry="2.1" fill="#dcdcdc"/><circle cx="5" cy="2.4" r="0.7" fill="#555"/></svg>
<svg style="left:1023.9px;top:406.3px" width="9.9" height="9.9" viewBox="0 0 10 10"><path d="M0.3 9.8 L0.9 6.6 L6.4 1.1 L9 3.7 L3.5 9.2 Z" fill="#e2e2e2"/><path d="M7 0.6 L7.7 0 L10.1 2.4 L9.5 3.1 Z" fill="#e2e2e2"/><path d="M1.3 6.9 L3.2 8.8" stroke="#2a2a2a" stroke-width="0.5"/></svg>
<svg style="left:1051.9px;top:406.0px" width="9.8" height="10" viewBox="0 0 10 10.4"><path d="M6.4 0.5 H1.1 Q0.5 0.5 0.5 1.1 V9.3 Q0.5 9.9 1.1 9.9 H4.2" fill="none" stroke="#e2e2e2" stroke-width="0.9"/><path d="M6.2 0.5 L8.7 3 V4.6" fill="none" stroke="#e2e2e2" stroke-width="0.9"/><path d="M5 10 L5.4 8.2 L8.6 5 L10 6.4 L6.8 9.6 Z" fill="#e2e2e2"/></svg>
<svg style="left:1108.5px;top:407.2px" width="4.3" height="8.3" viewBox="0 0 4.2 8.8"><rect x="1.2" y="0" width="2" height="1.9" fill="#ececec"/><path d="M0.3 3 H3.2 V7.6 H4.2 V8.8 H0 V7.6 H1.2 V4.2 H0.3 Z" fill="#ececec"/></svg>
<svg style="left:1133.2px;top:406.7px" width="9.4" height="8.6" viewBox="0 0 10 9.6"><path d="M0.6 1.7 H6 V0 L10 2.8 L6 5.6 V3.9 H0.6 Z" fill="#e8e8e8"/><path d="M9.4 5.8 H4 V4.1 L0 6.9 L4 9.6 V8 H9.4 Z" fill="#e8e8e8"/></svg>
<svg style="left:1160.9px;top:406.2px" width="7.8" height="10" viewBox="0 0 8 10"><path d="M0 1.9 H8" stroke="#dcdcdc" stroke-width="1"/><path d="M2.7 1.6 V0.5 H5.3 V1.6" fill="none" stroke="#dcdcdc" stroke-width="0.9"/><path d="M0.9 2.2 L1.2 9.5 H6.8 L7.1 2.2" fill="none" stroke="#dcdcdc" stroke-width="0.9"/><path d="M3.1 3.4 V8.2 M4.9 3.4 V8.2" stroke="#d0d0d0" stroke-width="0.55"/></svg>
<div class="cb" style="top:446.0px"></div>
<svg style="left:248.9px;top:447.0px" width="9.4" height="9.4" viewBox="0 0 9.4 9.4"><rect x="0" y="0" width="9.4" height="9.4" rx="0.8" fill="#d6d6d6"/><rect x="1" y="0.9" width="7.4" height="1.5" fill="#8a8a8a"/><rect x="1" y="3" width="7.4" height="5.6" fill="#f4f4f4"/><rect x="3.8" y="4" width="4.6" height="4.6" fill="#6a3fc0"/><rect x="5.2" y="5.4" width="1.8" height="1.8" fill="#e8defa"/></svg>
<div class="t" style="left:261.8px;top:447.00px;font-size:8.13px;">Powerhouse RTL+ im Oktober</div>
<svg style="left:530px;top:447.7px" width="10.2" height="7.8" viewBox="0 0 10.2 7.8"><rect width="10.2" height="2.7" fill="#0a0a0a"/><rect y="2.6" width="10.2" height="2.7" fill="#dd1c1c"/><rect y="5.2" width="10.2" height="2.6" fill="#f5c400"/></svg>
<div class="t" style="left:540.5px;top:448.00px;font-size:8.0px;">Deutsch</div>
<div class="t" style="left:663.7px;top:447.00px;font-size:8.36px;">2025-11-18 10:46</div>
<div class="badge" style="top:446.1px"></div>
<div class="t b" style="left:759.3px;top:448.00px;font-size:7.25px;color:#fff">created</div>
<div class="t" style="left:915.4px;top:448.00px;font-size:8.0px;">Editing</div>
<div class="grp" style="left:988px;top:439.7px;width:82px"></div>
<div class="grp" style="left:1070px;top:439.7px;width:108.9px"></div>
<div class="sep" style="left:1015.3px;top:440.7px"></div>
<div class="sep" style="left:1042.2px;top:440.7px"></div>
<div class="sep" style="left:1097.2px;top:440.7px"></div>
<div class="sep" style="left:1124.4px;top:440.7px"></div>
<div class="sep" style="left:1151px;top:440.7px"></div>
<svg style="left:997.3px;top:447.4px" width="10" height="8" viewBox="0 0 10 8"><ellipse cx="5" cy="4.1" rx="4.6" ry="3.3" fill="none" stroke="#d8d8d8" stroke-width="0.9"/><ellipse cx="5" cy="3.2" rx="2.5" ry="2.1" fill="#dcdcdc"/><circle cx="5" cy="2.4" r="0.7" fill="#555"/></svg>
<svg style="left:1023.9px;top:446.9px" width="9.9" height="9.9" viewBox="0 0 10 10"><path d="M0.3 9.8 L0.9 6.6 L6.4 1.1 L9 3.7 L3.5 9.2 Z" fill="#e2e2e2"/><path d="M7 0.6 L7.7 0 L10.1 2.4 L9.5 3.1 Z" fill="#e2e2e2"/><path d="M1.3 6.9 L3.2 8.8" stroke="#2a2a2a" stroke-width="0.5"/></svg>
<svg style="left:1051.9px;top:446.6px" width="9.8" height="10" viewBox="0 0 10 10.4"><path d="M6.4 0.5 H1.1 Q0.5 0.5 0.5 1.1 V9.3 Q0.5 9.9 1.1 9.9 H4.2" fill="none" stroke="#e2e2e2" stroke-width="0.9"/><path d="M6.2 0.5 L8.7 3 V4.6" fill="none" stroke="#e2e2e2" stroke-width="0.9"/><path d="M5 10 L5.4 8.2 L8.6 5 L10 6.4 L6.8 9.6 Z" fill="#e2e2e2"/></svg>
<svg style="left:1108.5px;top:447.8px" width="4.3" height="8.3" viewBox="0 0 4.2 8.8"><rect x="1.2" y="0" width="2" height="1.9" fill="#ececec"/><path d="M0.3 3 H3.2 V7.6 H4.2 V8.8 H0 V7.6 H1.2 V4.2 H0.3 Z" fill="#ececec"/></svg>
<svg style="left:1133.2px;top:447.3px" width="9.4" height="8.6" viewBox="0 0 10 9.6"><path d="M0.6 1.7 H6 V0 L10 2.8 L6 5.6 V3.9 H0.6 Z" fill="#e8e8e8"/><path d="M9.4 5.8 H4 V4.1 L0 6.9 L4 9.6 V8 H9.4 Z" fill="#e8e8e8"/></svg>
<svg style="left:1160.9px;top:446.8px" width="7.8" height="10" viewBox="0 0 8 10"><path d="M0 1.9 H8" stroke="#dcdcdc" stroke-width="1"/><path d="M2.7 1.6 V0.5 H5.3 V1.6" fill="none" stroke="#dcdcdc" stroke-width="0.9"/><path d="M0.9 2.2 L1.2 9.5 H6.8 L7.1 2.2" fill="none" stroke="#dcdcdc" stroke-width="0.9"/><path d="M3.1 3.4 V8.2 M4.9 3.4 V8.2" stroke="#d0d0d0" stroke-width="0.55"/></svg>
<div class="cb" style="top:486.6px"></div>
<svg style="left:248.9px;top:487.6px" width="9.4" height="9.4" viewBox="0 0 9.4 9.4"><rect x="0" y="0" width="9.4" height="9.4" rx="0.8" fill="#d6d6d6"/><rect x="1" y="0.9" width="7.4" height="1.5" fill="#8a8a8a"/><rect x="1" y="3" width="7.4" height="5.6" fill="#f4f4f4"/><rect x="3.8" y="4" width="4.6" height="4.6" fill="#6a3fc0"/><rect x="5.2" y="5.4" width="1.8" height="1.8" fill="#e8defa"/></svg>
<div class="t" style="left:261.8px;top:488.00px;font-size:8.09px;">Powerhouse RTL+ im Oktober Reich</div>
<svg style="left:530px;top:488.3px" width="10.2" height="7.8" viewBox="0 0 10.2 7.8"><rect width="10.2" height="2.7" fill="#0a0a0a"/><rect y="2.6" width="10.2" height="2.7" fill="#dd1c1c"/><rect y="5.2" width="10.2" height="2.6" fill="#f5c400"/></svg>
<div class="t" style="left:540.5px;top:489.00px;font-size:8.0px;">Deutsch</div>
<div class="t" style="left:663.7px;top:488.00px;font-size:8.36px;">2025-11-18 10:46</div>
<div class="badge" style="top:486.7px"></div>
<div class="t b" style="left:759.3px;top:489.00px;font-size:7.25px;color:#fff">created</div>
<div class="t" style="left:915.4px;top:489.00px;font-size:8.0px;">Editing</div>
<div class="grp" style="left:988px;top:480.3px;width:82px"></div>
<div class="grp" style="left:1070px;top:480.3px;width:108.9px"></div>
<div class="sep" style="left:1015.3px;top:481.3px"></div>
<div class="sep" style="left:1042.2px;top:481.3px"></div>
<div class="sep" style="left:1097.2px;top:481.3px"></div>
<div class="sep" style="left:1124.4px;top:481.3px"></div>
<div class="sep" style="left:1151px;top:481.3px"></div>
<svg style="left:997.3px;top:488.0px" width="10" height="8" viewBox="0 0 10 8"><ellipse cx="5" cy="4.1" rx="4.6" ry="3.3" fill="none" stroke="#d8d8d8" stroke-width="0.9"/><ellipse cx="5" cy="3.2" rx="2.5" ry="2.1" fill="#dcdcdc"/><circle cx="5" cy="2.4" r="0.7" fill="#555"/></svg>
<svg style="left:1023.9px;top:487.5px" width="9.9" height="9.9" viewBox="0 0 10 10"><path d="M0.3 9.8 L0.9 6.6 L6.4 1.1 L9 3.7 L3.5 9.2 Z" fill="#e2e2e2"/><path d="M7 0.6 L7.7 0 L10.1 2.4 L9.5 3.1 Z" fill="#e2e2e2"/><path d="M1.3 6.9 L3.2 8.8" stroke="#2a2a2a" stroke-width="0.5"/></svg>
<svg style="left:1051.9px;top:487.2px" width="9.8" height="10" viewBox="0 0 10 10.4"><path d="M6.4 0.5 H1.1 Q0.5 0.5 0.5 1.1 V9.3 Q0.5 9.9 1.1 9.9 H4.2" fill="none" stroke="#e2e2e2" stroke-width="0.9"/><path d="M6.2 0.5 L8.7 3 V4.6" fill="none" stroke="#e2e2e2" stroke-width="0.9"/><path d="M5 10 L5.4 8.2 L8.6 5 L10 6.4 L6.8 9.6 Z" fill="#e2e2e2"/></svg>
<svg style="left:1108.5px;top:488.4px" width="4.3" height="8.3" viewBox="0 0 4.2 8.8"><rect x="1.2" y="0" width="2" height="1.9" fill="#ececec"/><path d="M0.3 3 H3.2 V7.6 H4.2 V8.8 H0 V7.6 H1.2 V4.2 H0.3 Z" fill="#ececec"/></svg>
<svg style="left:1133.2px;top:487.9px" width="9.4" height="8.6" viewBox="0 0 10 9.6"><path d="M0.6 1.7 H6 V0 L10 2.8 L6 5.6 V3.9 H0.6 Z" fill="#e8e8e8"/><path d="M9.4 5.8 H4 V4.1 L0 6.9 L4 9.6 V8 H9.4 Z" fill="#e8e8e8"/></svg>
<svg style="left:1160.9px;top:487.4px" width="7.8" height="10" viewBox="0 0 8 10"><path d="M0 1.9 H8" stroke="#dcdcdc" stroke-width="1"/><path d="M2.7 1.6 V0.5 H5.3 V1.6" fill="none" stroke="#dcdcdc" stroke-width="0.9"/><path d="M0.9 2.2 L1.2 9.5 H6.8 L7.1 2.2" fill="none" stroke="#dcdcdc" stroke-width="0.9"/><path d="M3.1 3.4 V8.2 M4.9 3.4 V8.2" stroke="#d0d0d0" stroke-width="0.55"/></svg>
<div class="cb" style="top:527.2px"></div>
<svg style="left:248.9px;top:528.2px" width="9.4" height="9.4" viewBox="0 0 9.4 9.4"><rect x="0" y="0" width="9.4" height="9.4" rx="0.8" fill="#d6d6d6"/><rect x="1" y="0.9" width="7.4" height="1.5" fill="#8a8a8a"/><rect x="1" y="3" width="7.4" height="5.6" fill="#f4f4f4"/><rect x="3.8" y="4" width="4.6" height="4.6" fill="#6a3fc0"/><rect x="5.2" y="5.4" width="1.8" height="1.8" fill="#e8defa"/></svg>
<div class="t" style="left:261.8px;top:528.00px;font-size:8.11px;">TV bleibt zentral für das Vertr</div>
<svg style="left:530px;top:528.9px" width="10.2" height="7.8" viewBox="0 0 10.2 7.8"><rect width="10.2" height="2.7" fill="#0a0a0a"/><rect y="2.6" width="10.2" height="2.7" fill="#dd1c1c"/><rect y="5.2" width="10.2" height="2.6" fill="#f5c400"/></svg>
<div class="t" style="left:540.5px;top:529.00px;font-size:8.0px;">Deutsch</div>
<div class="t" style="left:663.7px;top:528.00px;font-size:8.36px;">2025-11-18 10:46</div>
<div class="badge" style="top:527.3px"></div>
<div class="t b" style="left:759.3px;top:529.00px;font-size:7.25px;color:#fff">created</div>
<div class="t" style="left:915.4px;top:529.00px;font-size:8.0px;">Editing</div>
<div class="grp" style="left:988px;top:520.9px;width:82px"></div>
<div class="grp" style="left:1070px;top:520.9px;width:108.9px"></div>
<div class="sep" style="left:1015.3px;top:521.9px"></div>
<div class="sep" style="left:1042.2px;top:521.9px"></div>
<div class="sep" style="left:1097.2px;top:521.9px"></div>
<div class="sep" style="left:1124.4px;top:521.9px"></div>
<div class="sep" style="left:1151px;top:521.9px"></div>
<svg style="left:997.3px;top:528.6px" width="10" height="8" viewBox="0 0 10 8"><ellipse cx="5" cy="4.1" rx="4.6" ry="3.3" fill="none" stroke="#d8d8d8" stroke-width="0.9"/><ellipse cx="5" cy="3.2" rx="2.5" ry="2.1" fill="#dcdcdc"/><circle cx="5" cy="2.4" r="0.7" fill="#555"/></svg>
<svg style="left:1023.9px;top:528.1px" width="9.9" height="9.9" viewBox="0 0 10 10"><path d="M0.3 9.8 L0.9 6.6 L6.4 1.1 L9 3.7 L3.5 9.2 Z" fill="#e2e2e2"/><path d="M7 0.6 L7.7 0 L10.1 2.4 L9.5 3.1 Z" fill="#e2e2e2"/><path d="M1.3 6.9 L3.2 8.8" stroke="#2a2a2a" stroke-width="0.5"/></svg>
<svg style="left:1051.9px;top:527.8px" width="9.8" height="10" viewBox="0 0 10 10.4"><path d="M6.4 0.5 H1.1 Q0.5 0.5 0.5 1.1 V9.3 Q0.5 9.9 1.1 9.9 H4.2" fill="none" stroke="#e2e2e2" stroke-width="0.9"/><path d="M6.2 0.5 L8.7 3 V4.6" fill="none" stroke="#e2e2e2" stroke-width="0.9"/><path d="M5 10 L5.4 8.2 L8.6 5 L10 6.4 L6.8 9.6 Z" fill="#e2e2e2"/></svg>
<svg style="left:1108.5px;top:529.0px" width="4.3" height="8.3" viewBox="0 0 4.2 8.8"><rect x="1.2" y="0" width="2" height="1.9" fill="#ececec"/><path d="M0.3 3 H3.2 V7.6 H4.2 V8.8 H0 V7.6 H1.2 V4.2 H0.3 Z" fill="#ececec"/></svg>
<svg style="left:1133.2px;top:528.5px" width="9.4" height="8.6" viewBox="0 0 10 9.6"><path d="M0.6 1.7 H6 V0 L10 2.8 L6 5.6 V3.9 H0.6 Z" fill="#e8e8e8"/><path d="M9.4 5.8 H4 V4.1 L0 6.9 L4 9.6 V8 H9.4 Z" fill="#e8e8e8"/></svg>
<svg style="left:1160.9px;top:528.0px" width="7.8" height="10" viewBox="0 0 8 10"><path d="M0 1.9 H8" stroke="#dcdcdc" stroke-width="1"/><path d="M2.7 1.6 V0.5 H5.3 V1.6" fill="none" stroke="#dcdcdc" stroke-width="0.9"/><path d="M0.9 2.2 L1.2 9.5 H6.8 L7.1 2.2" fill="none" stroke="#dcdcdc" stroke-width="0.9"/><path d="M3.1 3.4 V8.2 M4.9 3.4 V8.2" stroke="#d0d0d0" stroke-width="0.55"/></svg>
</div>
</body>
</html>
